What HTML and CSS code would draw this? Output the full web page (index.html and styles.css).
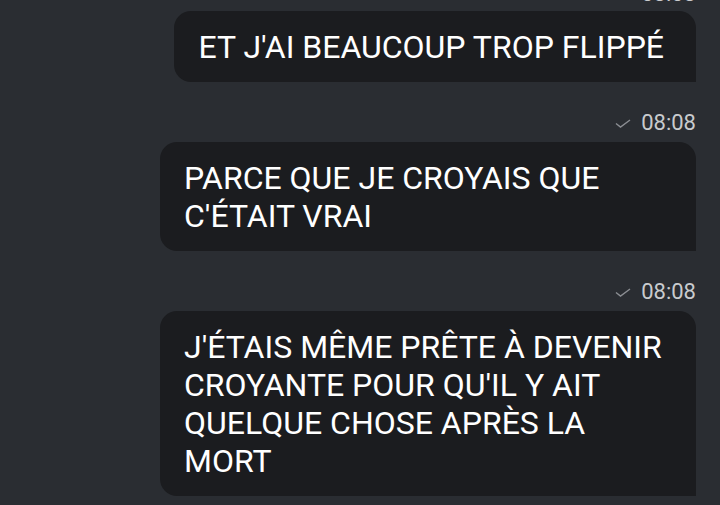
FILE: index.html
```html
<!DOCTYPE html>
<html lang="fr">
<head>
    <meta charset="UTF-8">
    <meta name="viewport" content="width=device-width, initial-scale=1.0">
    <title>Conversation</title>
    <link rel="stylesheet" href="styles.css">
</head>
<body>
    <div class="chat">
        <!-- message précédent, coupé en haut -->
        <div class="meta">
            <svg class="tick" width="16" height="9" viewBox="0 0 16 9"><polyline points="1,4.5 5.5,8 15,1" /></svg>
            <span class="time">08:08</span>
        </div>
        <div class="bubble">ET J'AI BEAUCOUP TROP FLIPPÉ</div>

        <div class="meta">
            <svg class="tick" width="16" height="9" viewBox="0 0 16 9"><polyline points="1,4.5 5.5,8 15,1" /></svg>
            <span class="time">08:08</span>
        </div>
        <div class="bubble">PARCE QUE JE CROYAIS QUE C'ÉTAIT VRAI</div>

        <div class="meta">
            <svg class="tick" width="16" height="9" viewBox="0 0 16 9"><polyline points="1,4.5 5.5,8 15,1" /></svg>
            <span class="time">08:08</span>
        </div>
        <div class="bubble">J'ÉTAIS MÊME PRÊTE À DEVENIR CROYANTE POUR QU'IL Y AIT QUELQUE CHOSE APRÈS LA MORT</div>
    </div>
</body>
</html>
```

FILE: styles.css
```css
html, body {
    margin: 0;
    padding: 0;
    background-color: #2a2d32;
    height: 100%;
    overflow: hidden;
}

body {
    font-family: 'Roboto', 'Noto Sans', sans-serif;
    color: #ffffff;
}

.chat {
    display: flex;
    flex-direction: column;
    align-items: flex-end;
    padding-right: 24px;
    margin-top: -17px;
}

.meta {
    display: flex;
    align-items: center;
    gap: 10px;
    height: 22px;
    margin-top: 30px;
    margin-bottom: 8px;
}

.meta:first-child {
    margin-top: 0;
    margin-bottom: 6px;
}

.tick {
    fill: none;
    stroke: #8b8e93;
    stroke-width: 1.4;
}

.time {
    font-size: 22px;
    line-height: 22px;
    color: #c9cbce;
}

.bubble {
    box-sizing: border-box;
    max-width: 536px;
    width: fit-content;
    padding: 17px 32px 16px 24px;
    background-color: #1b1c1f;
    border-radius: 17px 17px 0 17px;
    font-size: 32px;
    line-height: 38px;
}
```
